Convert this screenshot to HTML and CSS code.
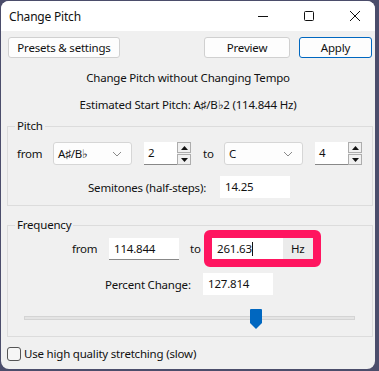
FILE: index.html
```html
<!DOCTYPE html>
<html lang="en">

<head>
  <meta charset="UTF-8">
  <title>Change Pitch</title>
  <link rel="stylesheet" href="styles.css">
</head>

<body>

  <div class="window">
    <div class="titlebar">
      <span class="title">Change Pitch</span>
      <div class="controls">
        <span class="ctl">
          <svg width="12" height="12" viewBox="0 0 12 12"><path d="M1 6.5h10" stroke="#111" stroke-width="1"/></svg>
        </span>
        <span class="ctl">
          <svg width="12" height="12" viewBox="0 0 12 12"><rect x="1.5" y="1.5" width="9" height="9" rx="1" fill="none" stroke="#111" stroke-width="1"/></svg>
        </span>
        <span class="ctl">
          <svg width="12" height="12" viewBox="0 0 12 12"><path d="M1 1l10 10M11 1L1 11" stroke="#111" stroke-width="1"/></svg>
        </span>
      </div>
    </div>

    <div class="toolbar">
      <button class="btn presets">Presets &amp; settings</button>
      <div class="spacer"></div>
      <button class="btn preview">Preview</button>
      <button class="btn apply">Apply</button>
    </div>

    <p class="info first">Change Pitch without Changing Tempo</p>
    <p class="info">Estimated Start Pitch: A♯/B♭2 (114.844 Hz)</p>

    <!-- Pitch -->
    <fieldset class="group pitch">
      <legend>Pitch</legend>
      <div class="row pitch-row">
        <span class="lbl from">from</span>
        <div class="select">
          <span>A♯/B♭</span>
          <svg class="chev" width="10" height="6" viewBox="0 0 10 6"><path d="M1 1l4 4 4-4" fill="none" stroke="#8a8a8a"/></svg>
        </div>
        <div class="spin">
          <span class="spin-val">2</span>
          <div class="spin-btns">
            <span class="sb"><svg width="7" height="4" viewBox="0 0 7 4"><path d="M3.5 0L7 4H0z" fill="#111"/></svg></span>
            <span class="sb"><svg width="7" height="4" viewBox="0 0 7 4"><path d="M0 0h7L3.5 4z" fill="#111"/></svg></span>
          </div>
        </div>
        <span class="lbl to">to</span>
        <div class="select">
          <span>C</span>
          <svg class="chev" width="10" height="6" viewBox="0 0 10 6"><path d="M1 1l4 4 4-4" fill="none" stroke="#8a8a8a"/></svg>
        </div>
        <div class="spin">
          <span class="spin-val">4</span>
          <div class="spin-btns">
            <span class="sb"><svg width="7" height="4" viewBox="0 0 7 4"><path d="M3.5 0L7 4H0z" fill="#111"/></svg></span>
            <span class="sb"><svg width="7" height="4" viewBox="0 0 7 4"><path d="M0 0h7L3.5 4z" fill="#111"/></svg></span>
          </div>
        </div>
      </div>
      <div class="row semi-row">
        <span class="lbl semi-lbl">Semitones (half-steps):</span>
        <span class="field plain">14.25</span>
      </div>
    </fieldset>

    <!-- Frequency -->
    <fieldset class="group freq">
      <legend>Frequency</legend>
      <div class="row freq-row">
        <span class="lbl from2">from</span>
        <span class="field under">114.844</span>
        <span class="lbl to2">to</span>
        <div class="highlight">
          <span class="field target">261.63<i class="caret"></i></span>
          <span class="unit">Hz</span>
        </div>
      </div>
      <div class="row pct-row">
        <span class="lbl pct-lbl">Percent Change:</span>
        <span class="field plain">127.814</span>
      </div>
      <div class="slider">
        <div class="track"></div>
        <svg class="thumb" width="12" height="20" viewBox="0 0 12 20"><path d="M1 0h10a1 1 0 0 1 1 1v13l-6 6-6-6V1a1 1 0 0 1 1-1z" fill="#0067c0"/></svg>
      </div>
    </fieldset>

    <label class="check">
      <span class="box"></span>
      Use high quality stretching (slow)
    </label>
  </div>

</body>

</html>
```

FILE: styles.css
```css
body {
  margin: 0;
  background: #4b4d6b;
  font-family: "Noto Sans", "Open Sans", sans-serif;
  font-size: 11.5px;
  letter-spacing: -0.2px;
  color: #111;
}

.window {
  margin: 1px 0 0 1px;
  width: 374px;
  height: 368px;
  background: #f0f0f0;
  border-radius: 8px;
  overflow: hidden;
  display: flex;
  flex-direction: column;
}

/* Title bar */
.titlebar {
  height: 30px;
  flex-shrink: 0;
  background: #fff;
  display: flex;
  align-items: center;
}

.title {
  margin-left: 8px;
  flex: 1;
  font-size: 12px;
}

.controls {
  display: flex;
  margin-right: -3px;
}

.ctl {
  width: 46px;
  height: 30px;
  display: flex;
  align-items: center;
  justify-content: center;
}

/* Toolbar */
.toolbar {
  display: flex;
  padding: 6px 3px 0 7px;
  gap: 9px;
}

.spacer {
  flex: 1;
}

.btn {
  font: inherit;
  letter-spacing: inherit;
  height: 21px;
  padding: 0;
  background: #fdfdfd;
  border: 1px solid #d0d0d0;
  border-radius: 3px;
  color: #111;
}

.presets {
  width: 112px;
}

.preview {
  width: 86px;
}

.apply {
  width: 73px;
  border-color: #0067c0;
}

.info {
  margin: 0;
  text-align: center;
  height: 27px;
  line-height: 27px;
}

.info.first {
  margin-top: 6px;
}

/* Groups */
.group {
  margin: 1px 2px 0 6px;
  padding: 0 0 6px 8px;
  border: 1px solid #dcdcdc;
  border-radius: 0;
}

.group legend {
  padding: 0 2px;
  margin-left: -1px;
  line-height: 14px;
}

.pitch {
  padding-bottom: 7px;
}

.row {
  display: flex;
  align-items: center;
}

.pitch-row {
  margin-top: 9px;
  height: 23px;
}

.lbl.from {
  width: 36px;
  padding-left: 1px;
}

.select {
  width: 79px;
  height: 23px;
  background: #fdfdfd;
  border: 1px solid #d6d6d6;
  border-radius: 3px;
  display: flex;
  align-items: center;
  padding: 0 9px 0 4px;
  box-sizing: border-box;
}

.select span {
  flex: 1;
}

.spin {
  display: flex;
  margin-left: 12px;
  height: 23px;
}

.spin-val {
  width: 33px;
  background: #fff;
  border-bottom: 1px solid #888;
  box-sizing: border-box;
  padding-left: 4px;
  line-height: 22px;
}

.spin-btns {
  display: flex;
  flex-direction: column;
  gap: 1px;
}

.sb {
  width: 14px;
  height: 11px;
  border: 1px solid #adadad;
  background: #f0f0f0;
  box-sizing: border-box;
  display: flex;
  align-items: center;
  justify-content: center;
}

.lbl.to {
  width: 21px;
  margin-left: 12px;
}

.semi-row {
  margin-top: 11px;
  margin-left: 72px;
}

.semi-lbl {
  width: 132px;
}

.field {
  display: inline-block;
  width: 70px;
  height: 22px;
  line-height: 22px;
  background: #fff;
  padding-left: 5px;
  box-sizing: border-box;
}

.field.under {
  border-bottom: 1px solid #888;
}

/* Frequency */
.freq {
  margin-top: 12px;
  padding-bottom: 7px;
}

.freq-row {
  margin-left: 56px;
  margin-top: -2px;
}

.from2 {
  width: 37px;
}

.lbl.to2 {
  margin-left: 11px;
  width: 14px;
}

.highlight {
  display: flex;
  border: 8px solid #ff1560;
  border-radius: 6px;
  background: #f0f0f0;
}

.highlight .field {
  width: 71px;
  height: 21px;
  line-height: 21px;
}

.caret {
  display: inline-block;
  width: 1px;
  height: 14px;
  background: #111;
  vertical-align: -3px;
}

.unit {
  width: 30px;
  padding-left: 8px;
  box-sizing: border-box;
  line-height: 21px;
  background: #ebebeb;
}

.pct-row {
  margin-top: 6px;
  margin-left: 89px;
}

.pct-lbl {
  width: 98px;
}

.slider {
  position: relative;
  margin: 14px 0 0 8px;
  width: 331px;
  height: 20px;
}

.track {
  position: absolute;
  left: 0;
  right: 0;
  top: 7px;
  height: 2px;
  background: #e4e4e4;
  border: 1px solid #d4d4d4;
}

.thumb {
  position: absolute;
  left: 226px;
  top: 0;
}

/* Checkbox */
.check {
  display: flex;
  align-items: center;
  gap: 3px;
  margin: 9px 0 0 6px;
  line-height: 16px;
}

.box {
  width: 12px;
  height: 12px;
  border: 1px solid #555;
  border-radius: 3px;
  background: #f6f6f6;
}
```
